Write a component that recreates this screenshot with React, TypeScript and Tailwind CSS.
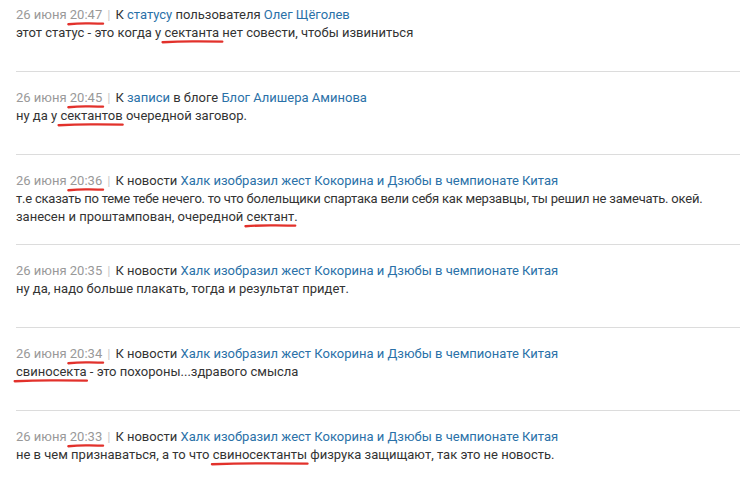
import React from 'react';

type Part = string | { mark: string } | { br: true; text: string };

type Item = {
  time: string;
  marked: boolean;
  prefix: string;
  target: string;
  middle?: string;
  title: string;
  body: Part[];
};

const items: Item[] = [
  {
    time: '20:47',
    marked: true,
    prefix: 'К ',
    target: 'статусу',
    middle: ' пользователя ',
    title: 'Олег Щёголев',
    body: ['этот статус - это когда у ', { mark: 'сектанта ' }, 'нет совести, чтобы извиниться'],
  },
  {
    time: '20:45',
    marked: true,
    prefix: 'К ',
    target: 'записи',
    middle: ' в блоге ',
    title: 'Блог Алишера Аминова',
    body: ['ну да у ', { mark: 'сектантов' }, ' очередной заговор.'],
  },
  {
    time: '20:36',
    marked: true,
    prefix: 'К новости ',
    target: '',
    title: 'Халк изобразил жест Кокорина и Дзюбы в чемпионате Китая',
    body: [
      { br: true, text: 'т.е сказать по теме тебе нечего. то что болельщики спартака вели себя как мерзавцы, ты решил не замечать. окей.' },
      'занесен и проштампован, очередной ',
      { mark: 'сектант' },
      '.',
    ],
  },
  {
    time: '20:35',
    marked: false,
    prefix: 'К новости ',
    target: '',
    title: 'Халк изобразил жест Кокорина и Дзюбы в чемпионате Китая',
    body: ['ну да, надо больше плакать, тогда и результат придет.'],
  },
  {
    time: '20:34',
    marked: true,
    prefix: 'К новости ',
    target: '',
    title: 'Халк изобразил жест Кокорина и Дзюбы в чемпионате Китая',
    body: [{ mark: 'свиносекта' }, ' - это похороны...здравого смысла'],
  },
  {
    time: '20:33',
    marked: true,
    prefix: 'К новости ',
    target: '',
    title: 'Халк изобразил жест Кокорина и Дзюбы в чемпионате Китая',
    body: ['не в чем признаваться, а то что ', { mark: 'свиносектанты' }, ' физрука защищают, так это не новость.'],
  },
];

// hand-drawn red pen stroke under a word
function Marked({ children }: { children: React.ReactNode }) {
  return (
    <span className="relative">
      {children}
      <svg
        className="absolute left-[-2px] top-full mt-[-1px] h-[5px] w-[calc(100%+3px)] overflow-visible"
        viewBox="0 0 100 5"
        preserveAspectRatio="none"
      >
        <path
          d="M1 3.2 Q 30 2.2 60 2.4 T 99 2.6"
          fill="none"
          stroke="#e2312b"
          strokeWidth="2.4"
          strokeLinecap="round"
          vectorEffect="non-scaling-stroke"
        />
      </svg>
    </span>
  );
}

export default function App() {
  return (
    <div className="w-[740px] h-[484px] overflow-hidden bg-white pl-4 text-[13px] text-[#333] font-['Roboto','Liberation_Sans',sans-serif]">
      {items.map((item, i) => (
        <div
          key={i}
          className={`${i === 0 ? 'pt-[5px]' : 'pt-[16px]'} ${i === 2 ? 'pb-[18px]' : 'pb-[17px]'} ${i < items.length - 1 ? 'border-b border-[#dcdcdc]' : ''}`}
        >
          <div className="leading-[19px] whitespace-nowrap">
            <span className="text-[#999]">
              26 июня {item.marked ? <Marked>{item.time}</Marked> : item.time}
            </span>
            <span className="text-[#c8c8c8] mx-[5px]">|</span>
            <span>{item.prefix}</span>
            {item.target && <span className="text-[#2a71a8]">{item.target}</span>}
            {item.middle && <span>{item.middle}</span>}
            <span className="text-[#2a71a8]">{item.title}</span>
          </div>
          <div className="leading-[18px] min-h-[30px]">
            {item.body.map((p, j) =>
              typeof p === 'string' ? (
                <span key={j}>{p}</span>
              ) : 'mark' in p ? (
                <Marked key={j}>{p.mark}</Marked>
              ) : (
                <div key={j} className="whitespace-nowrap tracking-[-0.22px]">{p.text}</div>
              )
            )}
          </div>
        </div>
      ))}
    </div>
  );
}
